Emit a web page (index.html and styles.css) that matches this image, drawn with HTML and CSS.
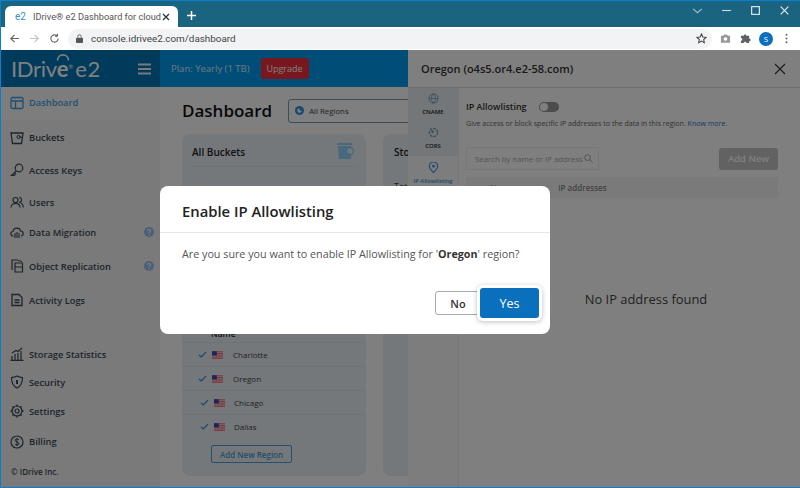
FILE: index.html
```html
<!DOCTYPE html>
<html lang="en">
<head>
<meta charset="utf-8">
<title>IDrive e2 Dashboard</title>
<link rel="stylesheet" href="styles.css">
</head>
<body>
<svg class="defs" width="0" height="0" aria-hidden="true">
  <symbol id="flag" viewBox="0 0 16 11">
    <rect width="16" height="11" fill="#e8e8f0"/>
    <path d="M0 .8h16M0 3.3h16M0 5.8h16M0 8.3h16M0 10.4h16" stroke="#ff5a6a" stroke-width="1.3"/>
    <rect width="7" height="6" fill="#3a4ab0"/>
  </symbol>
  <symbol id="check" viewBox="0 0 12 10">
    <path d="M1 5.5 4.2 8.5 11 1.5" fill="none" stroke="#2a90d8" stroke-width="1.7"/>
  </symbol>
  <symbol id="help" viewBox="0 0 10 10">
    <circle cx="5" cy="5" r="5" fill="#96c0f0"/>
    <path d="M3.5 3.8C3.5 2 6.6 2 6.6 3.8 6.6 5 5 4.9 5 6.2" fill="none" stroke="#fff" stroke-width="1.1"/>
    <circle cx="5" cy="7.9" r=".7" fill="#fff"/>
  </symbol>
</svg>
<div class="window">
  <div class="tabstrip">
    <div class="tab">
      <span class="fav">e2</span>
      <span class="tabtitle">IDrive® e2 Dashboard for cloud</span>
      <svg class="tabx" viewBox="0 0 8 8"><path d="M1 1l6 6M7 1 1 7" stroke="#333" stroke-width="1.3"/></svg>
    </div>
    <svg class="newtab" viewBox="0 0 9 9"><path d="M4.5 0v9M0 4.5h9" stroke="#fff" stroke-width="1.5"/></svg>
    <div class="winctl">
      <svg viewBox="0 0 10 10"><path d="M1 3.5 5 7l4-3.5" fill="none" stroke="#9fc0cf" stroke-width="1"/></svg>
      <svg viewBox="0 0 10 10"><path d="M1 5h8" stroke="#cfe0e8" stroke-width="1"/></svg>
      <svg viewBox="0 0 10 10"><rect x="1.5" y="1.5" width="7" height="7" fill="none" stroke="#e8f0f4" stroke-width="1"/></svg>
      <svg viewBox="0 0 10 10"><path d="M1.5 1.5l7 7M8.500 1.500l-7 7" stroke="#e8f0f4" stroke-width="1"/></svg>
    </div>
  </div>
  <div class="toolbar">
    <svg class="nav" viewBox="0 0 12 12"><path d="M11 6H2M6 2 2 6l4 4" fill="none" stroke="#666" stroke-width="1.3"/></svg>
    <svg class="nav" viewBox="0 0 12 12"><path d="M1 6h9M6 2l4 4-4 4" fill="none" stroke="#c4c4c4" stroke-width="1.3"/></svg>
    <svg class="nav" viewBox="0 0 12 12"><path d="M10 6a4 4 0 1 1-1.3-3M9.2 .8v2.8H6.4" fill="none" stroke="#666" stroke-width="1.2"/></svg>
    <div class="omnibox">
      <svg class="lock" viewBox="0 0 8 10"><path d="M2 4V2.8a2 2 0 0 1 4 0V4" fill="none" stroke="#555"/><rect y="4" width="8" height="6" rx="1" fill="#555"/></svg>
      <span class="url">console.idrivee2.com/dashboard</span>
      <svg class="star" viewBox="0 0 12 12"><path d="M6 1l1.5 3.3 3.5.4-2.6 2.4.7 3.5L6 8.900l-3.100 1.700.7-3.500L1 4.700l3.500-.4z" fill="none" stroke="#444" stroke-width="1.100"/></svg>
    </div>
    <svg class="tool cam" viewBox="0 0 12 12"><path d="M1 3h2.500l1-1.500h3l1 1.500H11v7.500H1z" fill="#999"/><circle cx="6" cy="6.500" r="2" fill="#fff"/></svg>
    <svg class="tool" viewBox="0 0 12 12"><path d="M1 3h3a1.500 1.500 0 0 1 3 0h3v3a1.500 1.500 0 0 1 0 3v2H7a1.500 1.500 0 0 0-3 0H1V8.500a1.500 1.500 0 0 0 0-3z" fill="#5f6368"/></svg>
    <span class="avatar">S</span>
    <svg class="dots" viewBox="0 0 3 12"><circle cx="1.500" cy="2" r="1.100" fill="#666"/><circle cx="1.500" cy="6" r="1.100" fill="#666"/><circle cx="1.500" cy="10" r="1.100" fill="#666"/></svg>
  </div>

  <div class="app">
    <header class="apphead">
      <div class="brand">
        <span class="logo">IDriv<span class="logo-e">e<svg class="logo-arc" viewBox="0 0 14 9"><path d="M1.500 8.500C1.500 1 12.500 1 12.500 8.500" fill="none" stroke="#fff" stroke-width="1.600"/></svg></span><sup class="logo-r">®</sup> <span class="logo-e2">e2</span></span>
        <svg class="burger" viewBox="0 0 13 12"><path d="M0 1.500h13M0 6h13M0 10.500h13" stroke="#f0f4f7" stroke-width="2"/></svg>
      </div>
      <span class="plan">Plan: Yearly (1 TB)</span>
      <span class="upgrade">Upgrade</span>
    </header>
    <div class="appbody">
      <nav class="sidebar">
        <a class="item active"><svg viewBox="0 0 14 14"><rect x="1" y="1.500" width="12" height="11" rx="1.500" fill="none" stroke="currentColor" stroke-width="1.300"/><path d="M1 5h12M5.500 5v7.500" stroke="currentColor" stroke-width="1.300"/></svg>Dashboard</a>
        <a class="item"><svg viewBox="0 0 14 14"><path d="M1 2h12l-1.500 10.500h-9zM9 5.500l4 1.500" fill="none" stroke="currentColor" stroke-width="1.300"/><circle cx="8.500" cy="6" r="1.600" fill="none" stroke="currentColor"/></svg>Buckets</a>
        <a class="item"><svg viewBox="0 0 14 14"><circle cx="9" cy="5" r="3.800" fill="none" stroke="currentColor" stroke-width="1.200"/><path d="M6.200 8 1.500 12.500h2.500L6 10.500" fill="none" stroke="currentColor" stroke-width="1.200"/></svg>Access Keys</a>
        <a class="item"><svg viewBox="0 0 14 14"><circle cx="5.500" cy="5" r="2.500" fill="none" stroke="currentColor" stroke-width="1.200"/><path d="M1 12.500c0-5.500 9-5.500 9 0M9 2.500a2.500 2.500 0 0 1 0 5M11 8c1.500.8 2.300 2.500 2.300 4.500" fill="none" stroke="currentColor" stroke-width="1.200"/></svg>Users</a>
        <a class="item"><svg viewBox="0 0 14 14"><path d="M3.500 11C0 11 0 6.500 3 6.500 3.500 2 10 2 10.500 6c3.500 0 3.500 5 .5 5" fill="none" stroke="currentColor" stroke-width="1.200"/><path d="M5 8v5M7 7v6M9 8v5" stroke="currentColor" stroke-width="1.100"/></svg>Data Migration<svg class="qm"><use href="#help"/></svg></a>
        <a class="item"><svg viewBox="0 0 14 14"><path d="M8 1H2v10M5 4h7.500v9H5zM5 8h7.500M8 1.500l4 1" fill="none" stroke="currentColor" stroke-width="1.200"/></svg>Object Replication<svg class="qm"><use href="#help"/></svg></a>
        <a class="item"><svg viewBox="0 0 14 14"><path d="M2 1.500h7l3 3v8H2zM4.500 7h5M4.500 9.500h5" fill="none" stroke="currentColor" stroke-width="1.300"/></svg>Activity Logs</a>
        <div class="spacer"></div>
        <a class="item"><svg viewBox="0 0 14 14"><path d="M2 13V9M5 13V7M8 13V6M11 13V4M.5 13.300h13M2 6l4-2.500 2 1L12 1" fill="none" stroke="currentColor" stroke-width="1.200"/></svg>Storage Statistics</a>
        <a class="item"><svg viewBox="0 0 14 14"><path d="M7 1c2 1 3.500 1.500 5.500 1.500 0 5-1 8.500-5.500 10.500C2.500 11 1.500 7.500 1.500 2.500 3.500 2.500 5 2 7 1z" fill="none" stroke="currentColor" stroke-width="1.200"/><rect x="6" y="5" width="2" height="4" fill="currentColor"/></svg>Security</a>
        <a class="item"><svg viewBox="0 0 14 14"><circle cx="7" cy="7" r="2" fill="none" stroke="currentColor" stroke-width="1.200"/><circle cx="7" cy="7" r="5" fill="none" stroke="currentColor" stroke-width="1.200"/><path d="M7 .5v2M7 11.500v2M.5 7h2M11.500 7h2M2.400 2.400l1.400 1.400M10.200 10.200l1.400 1.400M11.600 2.400l-1.400 1.400M3.800 10.200l-1.400 1.400" stroke="currentColor" stroke-width="1.300"/></svg>Settings</a>
        <a class="item"><svg viewBox="0 0 14 14"><circle cx="7" cy="7" r="6" fill="none" stroke="currentColor" stroke-width="1.200"/><path d="M9 5c-.5-1.500-4-1.500-4 .2C5 7.300 9 6.500 9 8.800 9 10.500 5.500 10.500 5 9M7 3v8" fill="none" stroke="currentColor"/></svg>Billing</a>
        <p class="copy">© IDrive Inc.</p>
      </nav>

      <main class="main">
        <div class="mainhead">
          <h1>Dashboard</h1>
          <div class="regionsel">
            <svg viewBox="0 0 10 10"><circle cx="5" cy="5" r="5" fill="#3090e0"/><path d="M5 2.500A2.500 2.500 0 1 0 7.500 5H5z" fill="#fff"/></svg>
            All Regions
          </div>
        </div>
        <div class="cards">
          <section class="card buckets">
            <div class="cardhead">
              <h2>All Buckets</h2>
              <svg class="bucketicon" viewBox="0 0 20 20"><rect x="1" y="1" width="15" height="2" fill="#90d0ff"/><path d="M2 4h13v13H3z" fill="#90d0ff"/><circle cx="14" cy="9" r="3.500" fill="#e8f0f6" stroke="#90d0ff" stroke-width="1.500"/></svg>
            </div>
            <div class="namehead">Name</div>
            <div class="region"><svg class="ck"><use href="#check"/></svg><svg class="fl"><use href="#flag"/></svg>Charlotte</div>
            <div class="region"><svg class="ck"><use href="#check"/></svg><svg class="fl"><use href="#flag"/></svg>Oregon</div>
            <div class="region sub"><svg class="ck"><use href="#check"/></svg><svg class="fl"><use href="#flag"/></svg>Chicago</div>
            <div class="region sub"><svg class="ck"><use href="#check"/></svg><svg class="fl"><use href="#flag"/></svg>Dallas</div>
            <span class="addregion">Add New Region</span>
          </section>
          <section class="card storage">
            <h2>Storage</h2>
            <p>Total</p>
          </section>
        </div>
      </main>
    </div>
  </div>

  <aside class="panel">
    <div class="panelhead">
      <span>Oregon (o4s5.or4.e2-58.com)</span>
      <svg viewBox="0 0 12 12"><path d="M1 1l10 10M11 1 1 11" stroke="#333" stroke-width="1.100"/></svg>
    </div>
    <div class="panelbody">
      <div class="tabs">
        <div class="ptab"><svg viewBox="0 0 12 12"><circle cx="6" cy="6" r="5" fill="none" stroke="#7a98b0"/><path d="M1 6h10M6 1c-3 3-3 7 0 10M6 1c3 3 3 7 0 10" fill="none" stroke="#7a98b0" stroke-width=".8"/></svg>CNAME</div>
        <div class="ptab"><svg viewBox="0 0 12 12"><circle cx="6" cy="6" r="4.500" fill="none" stroke="#7a98b0" stroke-width="1.400" stroke-dasharray="3 1"/><circle cx="5" cy="5" r="1.500" fill="#7a98b0"/></svg>CORS</div>
        <div class="ptab on"><svg viewBox="0 0 12 12"><path d="M6 11.500C3 8.500 1.500 6.500 1.500 4.500a4.500 4.500 0 0 1 9 0c0 2-1.500 4-4.500 7z" fill="none" stroke="#3c98e0" stroke-width="1.300"/><circle cx="6" cy="4.500" r="1.500" fill="#3c98e0"/></svg>IP Allowlisting</div>
      </div>
      <div class="pcontent">
        <div class="allowrow"><strong>IP Allowlisting</strong><span class="switch"><i></i></span></div>
        <p class="desc">Give access or block specific IP addresses to the data in this region. <a>Know more.</a></p>
        <div class="searchrow">
          <div class="search">Search by name or IP address
            <svg viewBox="0 0 10 10"><circle cx="4" cy="4" r="3.200" fill="none" stroke="#999"/><path d="M6.500 6.500 9.500 9.500" stroke="#999"/></svg>
          </div>
          <span class="addnew">Add New</span>
        </div>
        <div class="thead"><span>Name</span><span>IP addresses</span></div>
        <div class="empty">No IP address found</div>
      </div>
    </div>
  </aside>
  <div class="dim"></div>

  <div class="modal" role="dialog">
    <h3>Enable IP Allowlisting</h3>
    <p>Are you sure you want to enable IP Allowlisting for '<b>Oregon</b>' region?</p>
    <div class="actions">
      <button class="no">No</button>
      <button class="yes">Yes</button>
    </div>
  </div>
</div>
</body>
</html>
```
FILE: styles.css
```css
* { box-sizing: border-box; }
html, body { margin: 0; padding: 0; }
body { width: 800px; height: 488px; overflow: hidden; font-family: "Open Sans", "Noto Sans", sans-serif; color: #333; background: #fff; }
.defs { position: absolute; }
.window { position: relative; width: 800px; height: 488px; overflow: hidden; border-left: 1px solid #0a7fd0; border-bottom: 1px solid #0a7fd0; display: flex; flex-direction: column; }

.tabstrip { flex: none; height: 27px; background: #1a647f; border-top: 1px solid #0a7fd0; display: flex; align-items: flex-end; }
.tab { width: 173px; height: 21px; margin-left: 4px; background: #fff; border-radius: 6px 6px 0 0; display: flex; align-items: center; padding: 0 8px 0 10px; font-family: Roboto, sans-serif; font-size: 9.200px; color: #555; white-space: nowrap; overflow: hidden; }
.fav { color: #3a90c8; font-size: 10px; margin-right: 7px; }
.tabtitle { flex: 1; overflow: hidden; }
.tabx { width: 8px; height: 8px; flex: none; }
.newtab { width: 9px; height: 9px; margin: 0 0 7px 9px; }
.winctl { margin-left: auto; align-self: flex-start; display: flex; gap: 18px; padding: 4px 10px 0 0; }
.winctl svg { width: 11px; height: 11px; }

.toolbar { flex: none; height: 23px; background: #fff; display: flex; align-items: center; padding-left: 8px; }
.nav { width: 11px; height: 11px; margin-right: 9px; flex: none; }
.nav + .nav + .nav { margin-right: 8px; }
.omnibox { width: 644px; height: 20px; background: #f1f3f4; border-radius: 10px; display: flex; align-items: center; padding: 0 5px 0 8px; flex: none; }
.lock { width: 7px; height: 9px; margin-right: 8px; }
.url { font-family: Roboto, sans-serif; font-size: 9.900px; color: #444; }
.star { width: 11px; height: 11px; margin-left: auto; }
.tool { width: 11px; height: 11px; margin-left: 9px; flex: none; }
.cam { margin-left: 8px; }
.avatar { width: 14px; height: 14px; margin-left: 8px; border-radius: 50%; background: #0a6fbd; color: #fff; font-size: 8px; display: flex; align-items: center; justify-content: center; flex: none; }
.dots { width: 3px; height: 11px; margin-left: 12px; flex: none; }

.app { flex: 1; min-height: 0; display: flex; flex-direction: column; }
.apphead { flex: none; height: 37px; background: #009cf0; display: flex; align-items: center; color: #fff; }
.brand { width: 159px; height: 100%; background: #0077b8; display: flex; align-items: center; padding: 0 10px; flex: none; }
.logo { font-family: Lato, sans-serif; font-size: 22px; color: #fff; white-space: nowrap; letter-spacing: -.3px; }
.logo-e { font-weight: 700; position: relative; }
.logo-arc { position: absolute; left: -1px; top: -3px; width: 14px; height: 9px; }
.logo-r { font-size: 6px; }
.logo-e2 { font-size: 22px; margin-left: -3px; letter-spacing: .5px; }
.burger { width: 13px; height: 12px; margin-left: auto; margin-right: -1px; }
.plan { font-size: 9.500px; margin-left: 11px; color: #fff; opacity: .85; }
.upgrade { margin-left: 11px; background: #f0303c; color: #fff; font-size: 9px; height: 21px; width: 48px; border-radius: 3px; display: flex; align-items: center; justify-content: center; }

.appbody { flex: 1; min-height: 0; display: flex; }
.sidebar { width: 159px; flex: none; background: #f4f4f4; font-size: 9.300px; font-weight: 600; display: grid; grid-template-rows: 33px 35px 30px 34px 26px 42px 26px 27px 28px 28px 30px 31px auto; color: #3c4a56; }
.item { display: flex; align-items: center; gap: 5px; padding-left: 9px; padding-right: 6px; color: #3c4a56; white-space: nowrap; }
.item > svg:first-child { width: 14px; height: 14px; flex: none; }
.item.active { color: #3e9fe8; background: #fbfbfb; padding-bottom: 2px; }
.qm { width: 10px; height: 10px; margin-left: auto; }
.copy { margin: 9px 0 0 10px; font-size: 8px; font-weight: 600; }

.main { flex: 1; background: #fff; padding: 0 0 0 22px; min-width: 0; }
.mainhead { display: flex; align-items: center; height: 47px; }
h1 { margin: 0; font-size: 17px; font-weight: 600; color: #111; }
.regionsel { width: 140px; height: 24px; margin-left: 16px; border: 1px solid #7a97ad; border-radius: 3px; display: flex; align-items: center; gap: 5px; padding-left: 6px; font-size: 7.800px; color: #444; }
.regionsel svg { width: 9px; height: 9px; }
.cards { display: flex; gap: 17px; }
.card { background: #e8f0f6; border-radius: 8px; height: 342px; }
.buckets { width: 184px; padding: 0 10px; }
.storage { width: 120px; padding: 0 11px; }
.cardhead { display: flex; justify-content: space-between; align-items: center; height: 33px; padding-top: 3px; border-bottom: 1px solid #dde6ec; }
h2 { margin: 0; font-size: 10px; font-weight: 600; color: #222; }
.storage h2 { line-height: 36px; height: 33px; }
.storage p { margin: 13px 0 0; font-size: 9px; color: #444; }
.bucketicon { width: 20px; height: 20px; }
.namehead { margin: 161px 0 0 19px; height: 14px; font-size: 8.500px; font-weight: 600; color: #333; }
.region { display: flex; align-items: center; height: 24px; font-size: 8px; color: #444; border-top: 1px solid #dde6ec; margin: 0 -10px; padding-left: 16px; }
.ck { width: 9px; height: 7px; margin-right: 5px; }
.fl { width: 11px; height: 8px; margin-right: 10px; }
.sub { padding-left: 18px; }
.sub .fl { margin-right: 9px; }
.addregion { display: flex; align-items: center; justify-content: center; width: 81px; height: 18px; margin: 7px 0 0 19px; border: 1px solid #4aa0d8; border-radius: 2px; font-size: 8px; font-weight: 600; color: #4a9ad0; }

.dim { position: absolute; inset: 50px 0 0 0; background: rgba(0, 0, 0, .5); }

.panel { position: absolute; left: 407px; top: 50px; right: 0; bottom: 0; background: #fff; display: flex; flex-direction: column; }
.panelhead { flex: none; height: 38px; border-bottom: 1px solid #d8d8d8; display: flex; justify-content: space-between; align-items: center; padding: 0 14px 0 13px; font-size: 11px; font-weight: 600; color: #333; }
.panelhead svg { width: 12px; height: 12px; }
.panelbody { flex: 1; display: flex; min-height: 0; }
.tabs { width: 51px; flex: none; background: #fafafa; border-right: 1px solid #eee; }
.ptab { display: flex; flex-direction: column; align-items: center; height: 34px; padding-top: 5px; font-size: 6px; font-weight: 600; color: #222; background: #e9eef2; white-space: nowrap; }
.ptab svg { width: 11px; height: 11px; margin-bottom: 4px; }
.ptab.on { background: #fafafa; color: #3c98e0; font-size: 5.800px; padding-top: 6px; }
.pcontent { flex: 1; padding: 0 22px 0 7px; position: relative; }
.allowrow { display: flex; align-items: center; gap: 12px; margin-top: 10px; height: 17px; font-size: 9px; color: #333; }
.allowrow strong { font-weight: 600; }
.switch { width: 20px; height: 10px; border-radius: 5px; background: #999; display: block; padding: 1px; }
.switch i { display: block; width: 8px; height: 8px; border-radius: 50%; background: #fff; }
.desc { margin: 3px 0 0; font-size: 7.070px; color: #666; white-space: nowrap; }
.desc a { color: #2a70d0; }
.searchrow { display: flex; justify-content: space-between; align-items: center; margin-top: 19px; }
.search { width: 133px; height: 23px; border: 1px solid #eee; border-radius: 2px; display: flex; align-items: center; justify-content: space-between; padding: 0 5px 0 8px; font-size: 7.800px; color: #aaa; white-space: nowrap; }
.search svg { width: 9px; height: 9px; flex: none; }
.addnew { width: 59px; height: 22px; background: #c4c4c4; color: #fff; border-radius: 3px; font-size: 9.500px; font-weight: 600; display: flex; align-items: center; justify-content: center; }
.thead { display: flex; gap: 45px; margin-top: 7px; height: 21px; align-items: center; padding-left: 24px; background: #f5f5f5; font-size: 8px; font-weight: 600; color: #888; }
.empty { margin-top: 92px; padding-left: 48px; text-align: center; font-size: 12.900px; color: #444; }

.modal { position: absolute; left: 159px; top: 186px; width: 390px; height: 148px; background: #fff; border-radius: 8px; }
h3 { margin: 0; height: 47px; padding: 15px 0 0 22px; font-size: 14.800px; font-weight: 600; color: #222; border-bottom: 1px solid #e8e8e8; line-height: 20px; }
.modal p { margin: 14px 0 0 22px; font-size: 10.750px; color: #555; white-space: nowrap; }
.modal b { color: #333; font-weight: 700; }
.actions { display: flex; align-items: center; justify-content: flex-end; margin: 27px 11px 0 0; }
button { font-family: inherit; padding: 0; }
.no { width: 46px; height: 24px; margin-right: -1px; background: #fff; border: 1px solid #aaa; border-radius: 3px; font-size: 11px; font-weight: 600; color: #333; }
.yes { position: relative; width: 59px; height: 30px; background: #0a6fbd; color: #fff; border: none; border-radius: 3px; font-size: 12.500px; box-shadow: 0 0 0 3px #fff, 0 1px 5px 3px rgba(0, 0, 0, .25); }
```
